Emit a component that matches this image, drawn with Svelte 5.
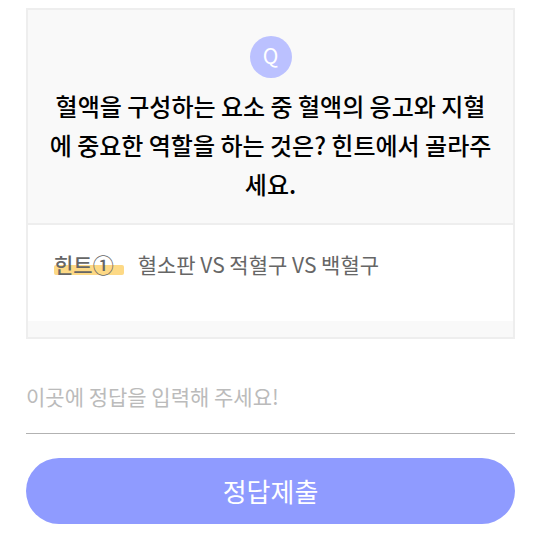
<script>
  let answer = $state('');
</script>

<main>
  <section class="card">
    <header class="question">
      <span class="badge">Q</span>
      <h1>혈액을 구성하는 요소 중 혈액의 응고와 지혈에 중요한 역할을 하는 것은? 힌트에서 골라주세요.</h1>
    </header>
    <div class="hint">
      <strong>힌트①</strong>
      <span>혈소판 VS 적혈구 VS 백혈구</span>
    </div>
  </section>
  <form onsubmit={(e) => e.preventDefault()}>
    <input type="text" bind:value={answer} aria-label="정답" placeholder="이곳에 정답을 입력해 주세요!" />
    <button type="submit">정답제출</button>
  </form>
</main>

<style>
  :global(body) {
    margin: 0;
    background: #fff;
  }
  main {
    padding: 8px 25px 10px 26px;
    font-family: "Noto Sans CJK KR", "Noto Sans", sans-serif;
  }
  .card {
    border: 2px solid #eee;
    background: #f9f9f9;
    padding-bottom: 16px;
  }
  .question {
    display: flex;
    flex-direction: column;
    align-items: center;
    padding: 26px 20px 20px;
    border-bottom: 2px solid #eee;
  }
  .badge {
    width: 42px;
    height: 42px;
    border-radius: 50%;
    background: #bbc1ff;
    color: #fff;
    font-size: 21px;
    line-height: 38px;
    text-align: center;
  }
  h1 {
    margin: 8px 0 0;
    font-size: 24px;
    line-height: 39px;
    font-weight: 500;
    text-align: center;
    color: #000;
    word-break: break-all;
  }
  .hint {
    display: flex;
    gap: 14px;
    padding: 23px 26px 40px;
    background: #fff;
    font-size: 21px;
    line-height: 33px;
    color: #666;
  }
  strong {
    position: relative;
    z-index: 0;
    padding-right: 10px;
    font-weight: 500;
  }
  strong::before {
    content: "";
    position: absolute;
    z-index: -1;
    left: 0;
    right: 0;
    bottom: 6px;
    height: 10px;
    border-radius: 2px;
    background: #fdd985;
  }
  form {
    margin-top: 35px;
  }
  input {
    display: block;
    box-sizing: border-box;
    width: 100%;
    height: 60px;
    padding: 0 0 16px;
    border: 0;
    border-bottom: 1px solid #b2b2b2;
    border-radius: 0;
    background: none;
    font: inherit;
    font-size: 21px;
    outline: none;
  }
  input::placeholder {
    color: #bbb;
    opacity: 1;
  }
  button {
    display: block;
    width: 100%;
    height: 66px;
    margin-top: 24px;
    padding: 0 0 2px;
    border: 0;
    border-radius: 33px;
    background: #8f9bff;
    color: #fff;
    font: inherit;
    font-size: 26px;
  }
</style>
